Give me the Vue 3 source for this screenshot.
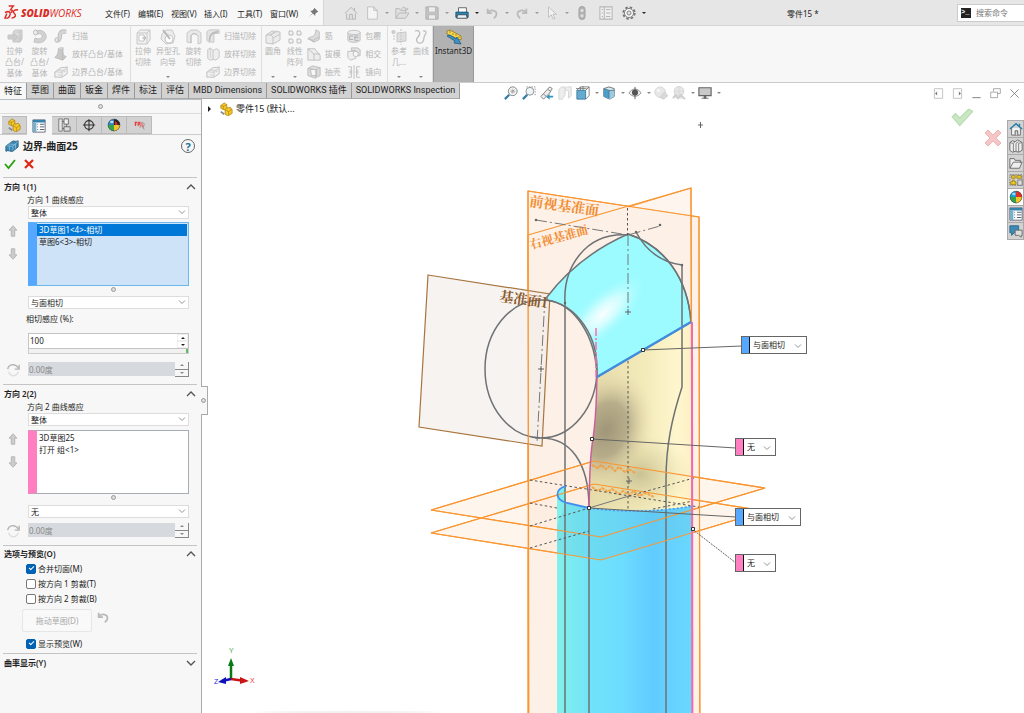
<script setup>
import { ref } from 'vue'

const menus = ['文件(F)', '编辑(E)', '视图(V)', '插入(I)', '工具(T)', '窗口(W)']
const quick = [
  { id: 'home', label: '主页', wide: false },
  { id: 'new', label: '新建', drop: true },
  { id: 'open', label: '打开', drop: true },
  { id: 'save', label: '保存', drop: true },
  { id: 'print', label: '打印', drop: true, on: true },
  { id: 'undo', label: '撤消', drop: true },
  { id: 'redo', label: '重做', drop: true },
  { id: 'cursor', label: '选择', drop: true },
  { id: 'traffic', label: '重建' },
  { id: 'sheet', label: '属性' },
  { id: 'gear', label: '选项', drop: true, on: true },
]
const ribbon = [
  {
    name: 'boss',
    big: [
      { id: 'extrude', lines: ['拉伸', '凸台/', '基体'] },
      { id: 'revolve', lines: ['旋转', '凸台/', '基体'] },
    ],
    small: [[
      { id: 'sweep', t: '扫描' },
      { id: 'loft', t: '放样凸台/基体' },
      { id: 'boundary', t: '边界凸台/基体' },
    ]],
  },
  {
    name: 'cut',
    big: [
      { id: 'cutbox', lines: ['拉伸', '切除'] },
      { id: 'hole', lines: ['异型孔', '向导'], drop: true },
      { id: 'cutrev', lines: ['旋转', '切除'] },
    ],
    small: [[
      { id: 'cutsweep', t: '扫描切除' },
      { id: 'cutloft', t: '放样切除' },
      { id: 'boundary', t: '边界切除' },
    ]],
  },
  {
    name: 'feat',
    big: [
      { id: 'fillet', lines: ['圆角'], drop: true },
      { id: 'pattern', lines: ['线性', '阵列'], drop: true },
    ],
    small: [
      [{ id: 'rib', t: '筋' }, { id: 'draft', t: '拔模' }, { id: 'shell', t: '抽壳' }],
      [{ id: 'wrap', t: '包覆' }, { id: 'intersect', t: '相交' }, { id: 'mirror', t: '镜向' }],
    ],
  },
  {
    name: 'ref',
    big: [
      { id: 'refgeo', lines: ['参考', '几...'], drop: true },
      { id: 'curve', lines: ['曲线'], drop: true },
    ],
    small: [],
  },
]
const tabs = ['特征', '草图', '曲面', '钣金', '焊件', '标注', '评估', 'MBD Dimensions', 'SOLIDWORKS 插件', 'SOLIDWORKS Inspection']
const activeTab = ref('特征')
const hud = [
  { id: 'zoomfit', label: '整屏显示全图' },
  { id: 'zoomarea', label: '局部放大' },
  { id: 'prevview', label: '上一视图' },
  { id: 'section', label: '剖面视图' },
  { id: 'orient', label: '视图定向', drop: true },
  { id: 'display', label: '显示样式', drop: true },
  { id: 'eye', label: '隐藏/显示', drop: true },
  { id: 'appear', label: '编辑外观' },
  { id: 'scene', label: '应用布景', drop: true },
  { id: 'monitor', label: '视图设定', drop: true },
]
const panelTabs = ['part', 'props', 'config', 'target', 'ball', 'ra']
const taskTabs = ['thome', 'library', 'folder', 'palette', 'ball', 'props', 'chat']
const wins = [
  { id: 'winleft', label: '左侧窗格' },
  { id: 'winright', label: '右侧窗格' },
  { id: 'winmin', label: '最小化' },
  { id: 'winrest', label: '还原' },
  { id: 'winclose', label: '关闭' },
]
const directions = [
  {
    n: 1, title: '方向 1(1)', label: '方向 1 曲线感应', items: ['3D草图1<4>-相切', '草图6<3>-相切'],
    on: true, end: '与面相切', influence: true,
  },
  { n: 2, title: '方向 2(2)', label: '方向 2 曲线感应', items: ['3D草图25', '打开 组<1>'], on: false, end: '无', influence: false },
]
const merge = ref(true)
const trim1 = ref(false)
const trim2 = ref(false)
const preview = ref(true)
const callouts = [
  { k: 'a', t: '与面相切', tone: 'blue', wide: true },
  { k: 'b', t: '无', tone: 'pink' },
  { k: 'c', t: '与面相切', tone: 'blue', wide: true },
  { k: 'd', t: '无', tone: 'pink' },
]
</script>

<template>
  <div class="app">
    <svg class="sprite" aria-hidden="true">
      <defs>
        <linearGradient id="gy" x1="0" y1="0" x2="1" y2="1"><stop offset="0" stop-color="#eeeeee" /><stop offset="1" stop-color="#c4c4c4" /></linearGradient>
        <symbol id="home" viewBox="0 0 16 16"><g fill="#e4e4e4" stroke="#b4b4b4" stroke-width="1.1"><path d="M3 8v7h10V8L8 3z" /><path d="M1 8.5 8 1.5l7 7M6.5 15V9.5h3V15M12 2v3.5" /></g></symbol>
        <symbol id="new" viewBox="0 0 16 16"><path d="M3 1h7l4 4v10H3zM10 1v4h4" fill="#f5f5f5" stroke="#bdbdbd" /></symbol>
        <symbol id="open" viewBox="0 0 16 16"><path d="M1 14V3h4l1.500 2H12v3M1 14l4-6h11l-4 6zM7 4c2-4 5-3 6 0M11 3l2.500 2L15 2" fill="#e0e0e0" stroke="#b4b4b4" /></symbol>
        <symbol id="save" viewBox="0 0 16 16"><path d="M1 1h13l1 1v13H1z" fill="#c3c3c3" stroke="#adadad" /><path d="M4 1h8v6H4zM4 10h8v5H4z" fill="#ededed" stroke="#b5b5b5" /></symbol>
        <symbol id="print" viewBox="0 0 16 16"><path d="M4 2h9v6H4z" fill="#fff" stroke="#555" /><path d="M1 7h14v6H1z" fill="#2c86b5" stroke="#164d6b" /><path d="M3 10h10l1 4H2z" fill="#e8f4fa" stroke="#444" /></symbol>
        <symbol id="undo" viewBox="0 0 16 16"><path d="M3 3v5h5M3 8c3-5 11-3 10 2-.3 2-1.500 3-3 4" fill="none" stroke="#bababa" stroke-width="2" /></symbol>
        <symbol id="redo" viewBox="0 0 16 16"><path d="M13 3v5H8M13 8C10 3 2 5 3 10c.3 2 1.500 3 3 4" fill="none" stroke="#bababa" stroke-width="2" /></symbol>
        <symbol id="cursor" viewBox="0 0 16 16"><path d="M4 1v12l3-3 2.500 5 2-1L9 9.500h4z" fill="#f2f2f2" stroke="#bcbcbc" /></symbol>
        <symbol id="traffic" viewBox="0 0 16 16"><rect x="4.500" y=".5" width="7" height="15" rx="3.500" fill="#b0b0b0" stroke="#a2a2a2" /><circle cx="8" cy="5" r="2" fill="#dcdcdc" /><circle cx="8" cy="11" r="2" fill="#dcdcdc" /></symbol>
        <symbol id="sheet" viewBox="0 0 16 16"><path d="M1 1h14v14H1zM6 1v14M8 4h5M8 8h5M8 12h5M3 4h1.500M3 8h1.500M3 12h1.500" fill="#eee" stroke="#b7b7b7" stroke-width="1.200" /></symbol>
        <symbol id="gear" viewBox="0 0 16 16"><circle cx="8" cy="8" r="6.500" fill="none" stroke="#777" stroke-width="2.200" stroke-dasharray="2.900 2.205" /><circle cx="8" cy="8" r="5.200" fill="#f5f5f5" stroke="#777" /><circle cx="8" cy="8" r="2.300" fill="#e6e6e6" stroke="#777" /></symbol>
        <symbol id="pin" viewBox="0 0 16 16"><path d="M9 1l6 6-2 .5-2.500 2.500v3L7 9.500 1 15l5.500-6L3 5.500h3L8.500 3z" fill="#777" /></symbol>
        <symbol id="extrude" viewBox="0 0 16 16"><g fill="url(#gy)" stroke="#c6c6c6"><path d="M6 3l2-2h7v9l-2 3H6z" /><path d="M6 3h7v10M13 3l2-2" /><path d="M1 6h6V4l4 4-4 4v-2H1z" fill="#ccc" /></g></symbol>
        <symbol id="revolve" viewBox="0 0 16 16"><path d="M4 2c9-3 13 6 8 10-3 2.500-7 2-10 1l1-4c5 2 8 0 7-3C9 4 6 5 4 5z" fill="#d2d2d2" stroke="#c3c3c3" /><ellipse cx="3.500" cy="3.500" rx="2" ry="2.500" fill="#eee" stroke="#bbb" /></symbol>
        <symbol id="sweep" viewBox="0 0 16 16"><path d="M3 13c5 0 3-4 4-7 1-4 4-3 7-3" fill="none" stroke="#bdbdbd" stroke-width="5" /><path d="M3 13c5 0 3-4 4-7 1-4 4-3 7-3" fill="none" stroke="#d5d5d5" stroke-width="3" /><ellipse cx="3" cy="12.500" rx="2" ry="2.500" fill="#e8e8e8" stroke="#b5b5b5" /></symbol>
        <symbol id="loft" viewBox="0 0 16 16"><path d="M5 2h5c0 7 1 8 4 9l-4 4-9-3c3-3 4-5 4-10z" fill="#c9c9c9" stroke="#bababa" /><path d="M5 2l1-1h5l-1 1M10 2v13" fill="#eee" stroke="#bababa" /></symbol>
        <symbol id="boundary" viewBox="0 0 16 16"><path d="M1 8l7-5c1-1 3 1 7-1v8l-6 4c-2 1-4-1-8 0z" fill="#efefef" stroke="#bcbcbc" /><path d="M1 8c3-1 5 1 8 0l6-5M9 8v6M4 6c3-1 5 1 8 0M5 11l3 1M11 8l2-1" fill="none" stroke="#c9c9c9" /></symbol>
        <symbol id="cutbox" viewBox="0 0 16 16"><path d="M2 4l3-3h10v10l-3 4H2zM2 4h10v11M12 4l3-3" fill="#f1f1f1" stroke="#c6c6c6" /><path d="M4 6h5v6H4z" fill="#fff" stroke="#c6c6c6" /><path d="M7 9h3M9 7l2 2-2 2" stroke="#b8b8b8" fill="none" /></symbol>
        <symbol id="hole" viewBox="0 0 16 16"><path d="M2 5l4-4h6l3 6-2 7-7 1-5-5z" fill="#ececec" stroke="#c9c9c9" /><circle cx="9" cy="10" r="4" fill="#fff" stroke="#c6c6c6" /><path d="M3 1l7 9" stroke="#b8b8b8" stroke-width="2" /></symbol>
        <symbol id="cutrev" viewBox="0 0 16 16"><path d="M1 4l4-3h6l4 3v10l-3 1V7c-2-3-6-3-7 0v7l-4-1z" fill="#e8e8e8" stroke="#c9c9c9" /><path d="M5 14V7c1-3 5-3 7 0" fill="none" stroke="#bebebe" /></symbol>
        <symbol id="cutsweep" viewBox="0 0 16 16"><path d="M1 3l3-2h11v4H9v10H3l-2-2z" fill="#e5e5e5" stroke="#c4c4c4" /><path d="M4 14C4 6 7 4 14 3" fill="none" stroke="#bcbcbc" stroke-width="2" /></symbol>
        <symbol id="cutloft" viewBox="0 0 16 16"><path d="M2 3l3-2 3 3v10l-3 1-3-2zM8 4l4-2 3 2v8l-4 3-3-1" fill="#eee" stroke="#c0c0c0" /><path d="M5 1v11" stroke="#ccc" /></symbol>
        <symbol id="fillet" viewBox="0 0 16 16"><path d="M1 6l6-4 8 1v8l-7 4-7-1z" fill="#ececec" stroke="#c4c4c4" /><path d="M1 6c5 0 7 0 7 4v5M8 9l7-4" fill="none" stroke="#c4c4c4" /><path d="M5 6l7-4" stroke="#ccc" stroke-width="2" /></symbol>
        <symbol id="pattern" viewBox="0 0 16 16"><g fill="#f3f3f3" stroke="#bcbcbc"><path d="M2 2h3l1 1v3H2zM10 2h3l1 1v3h-4zM2 10h3l1 1v3H2zM10 10h3l1 1v3h-4z" /></g></symbol>
        <symbol id="rib" viewBox="0 0 16 16"><path d="M10 1l4 2v9l-6 3-7-4 3-2c4 0 6-3 6-8z" fill="#dcdcdc" stroke="#bbb" /><path d="M1 11l6 2 7-4M7 13v2" fill="none" stroke="#bbb" /></symbol>
        <symbol id="draft" viewBox="0 0 16 16"><path d="M1 2h8l6 8v5H1z" fill="#ededed" stroke="#bdbdbd" /><path d="M1 2l7 6h7M8 8v7" fill="none" stroke="#bbb" /></symbol>
        <symbol id="shell" viewBox="0 0 16 16"><path d="M1 4l5-3 9 2v9l-6 3-8-3z" fill="#ddd" stroke="#b9b9b9" /><path d="M4 5h7v7H5zM1 4l9 1 5-2M10 5v10" fill="#f8f8f8" stroke="#b9b9b9" /></symbol>
        <symbol id="wrap" viewBox="0 0 16 16"><path d="M1 4v9c3 3 11 3 14 0V4z" fill="#e3e3e3" stroke="#bbb" /><ellipse cx="8" cy="4" rx="7" ry="2.500" fill="#eee" stroke="#bbb" /><path d="M7 8H3v4h4M13 8H9v5h4M9 10h4" stroke="#aaa" fill="none" /></symbol>
        <symbol id="intersect" viewBox="0 0 16 16"><path d="M5 1h7l3 2v7h-5V4H5z" fill="#e2e2e2" stroke="#bcbcbc" /><path d="M1 5h6l3 2v6l-6 2-3-3z" fill="#efefef" stroke="#bcbcbc" /><circle cx="10" cy="8" r="3" fill="#f7f7f7" stroke="#bbb" /></symbol>
        <symbol id="mirror" viewBox="0 0 16 16"><path d="M1 2h4v12H1M15 2h-4v12h4M8 0v16M2 8h3M14 8h-3M3 5l3 3-3 3M13 5l-3 3 3 3" fill="none" stroke="#bcbcbc" /></symbol>
        <symbol id="refgeo" viewBox="0 0 16 16"><path d="M6 4l9-1v9l-9 1z" fill="#dfdfdf" stroke="#c9c9c9" /><circle cx="2.500" cy="3" r="1.500" fill="#ddd" stroke="#bbb" /><path d="M10 0v16M3 6v6" stroke="#c5c5c5" stroke-dasharray="2 1" /></symbol>
        <symbol id="curve" viewBox="0 0 16 16"><path d="M2 2c5-2 6 3 3 6s-1 7 3 6 2-6 4-8 1-5-2-4" fill="none" stroke="#bdbdbd" stroke-width="1.200" /></symbol>
        <symbol id="instant" viewBox="0 0 16 16"><path d="M1 2l3-1 11 6v4l-3-1L1 5z" fill="#f9d74c" stroke="#8f7424" stroke-width=".8" /><path d="M4 2v2M7 4v2M10 5v2M13 7v2" stroke="#836a1e" stroke-width=".7" /><path d="M1 7l3-1 6 4 1-2 4 7-7-1 1-2z" fill="#3d92c7" stroke="#205a82" stroke-width=".8" /></symbol>
        <symbol id="zoomfit" viewBox="0 0 16 16"><path d="M1 15l5-5" stroke="#327da8" stroke-width="2.500" /><circle cx="10" cy="6" r="5" fill="#f7f7f7" stroke="#777" /><path d="M10 3v6M7 6h6M8 4l4 4M12 4L8 8" stroke="#999" stroke-width=".8" /></symbol>
        <symbol id="zoomarea" viewBox="0 0 16 16"><path d="M5 1h10v11" fill="none" stroke="#888" stroke-dasharray="1.500 1.500" /><path d="M1 15l5-5" stroke="#327da8" stroke-width="2.500" /><circle cx="9" cy="6" r="4.500" fill="#edf5f8" stroke="#888" /></symbol>
        <symbol id="prevview" viewBox="0 0 16 16"><path d="M1 12L11 1l3 2-3 5-7 7z" fill="#eee" stroke="#777" /><path d="M4 9l3 3M9 4l3 2" stroke="#777" /><path d="M15 11h-4V9l-4 3.500 4 3V13h4z" fill="#3794be" /></symbol>
        <symbol id="section" viewBox="0 0 16 16"><path d="M1 4l3-3h4v9l-3 5H1zM8 3l3-2h4v10l-3 3V6c-1-2-3-1-4 0" fill="#ededed" stroke="#d2d2d2" /></symbol>
        <symbol id="orient" viewBox="0 0 16 16"><path d="M5 1h10v10M1 5l4-4M11 5l4-4M11 15l4-4M5 1v4M8 0v5M0 3h12" fill="none" stroke="#777" /><path d="M1 5h10v10H1z" fill="#65abd0" stroke="#38799e" /></symbol>
        <symbol id="display" viewBox="0 0 16 16"><path d="M2 3l6-2 6 2v9l-5 3-7-3z" fill="#d9edf6" stroke="#666" /><path d="M2 3l6 2v10l-6-3z" fill="#4e9fc8" /><path d="M8 5h6v7l-5 3-1-1z" fill="#9acbe2" /><path d="M2 3l6 2h6M8 5v9" fill="none" stroke="#4d7485" /></symbol>
        <symbol id="eye" viewBox="0 0 16 16"><path d="M1 8c4-6 10-6 14 0-4 5-10 5-14 0z" fill="#eee" stroke="#888" /><circle cx="8" cy="7.500" r="3.500" fill="#555" /><path d="M8 1v14" stroke="#555" /></symbol>
        <symbol id="appear" viewBox="0 0 16 16"><circle cx="7" cy="7" r="6" fill="#e7e7e7" stroke="#d3d3d3" /><path d="M7 13l5-6 4 4-5 4z" fill="#dadada" stroke="#ccc" /><circle cx="5" cy="5" r="2" fill="#f5f5f5" /></symbol>
        <symbol id="scene" viewBox="0 0 16 16"><circle cx="8" cy="6" r="5.500" fill="#e7e7e7" stroke="#d0d0d0" /><path d="M1 14l3-4 3 4 3-4 5 5" fill="#e5e5e5" stroke="#cfcfcf" stroke-width="2" /><path d="M8 1v10M3 6h10" stroke="#d8d8d8" /></symbol>
        <symbol id="monitor" viewBox="0 0 16 16"><path d="M1 2h14v9H1z" fill="#c9c9c9" stroke="#666" stroke-width="1.300" /><path d="M7 11h2v3H7zM4 14h8" fill="#666" stroke="#666" /></symbol>
        <symbol id="part" viewBox="0 0 16 16"><path d="M2 4l4-3 3 2v4l4-1 2 3v4l-5 3-3-2V9L3 8 2 7z" fill="#f5c727" stroke="#a97d0b" stroke-width=".8" /><path d="M2 4l3 1 4-2M5 5v3M7 9l4 2 4-3M11 11v4M9 6l-2 3" fill="none" stroke="#a97d0b" stroke-width=".7" /><path d="M2 11l4 3" stroke="#888" stroke-width="2" /></symbol>
        <symbol id="props" viewBox="0 0 16 16"><path d="M1 1h14v14H1z" fill="#fff" stroke="#667" /><path d="M1 1h14v3H1z" fill="#3483ac" /><path d="M1 4h4v11H1z" fill="#78afca" /><path d="M6 6h1M9 6h5M6 9h1M9 9h5M6 12h1M9 12h5" stroke="#456" /></symbol>
        <symbol id="config" viewBox="0 0 16 16"><path d="M2 1h4v14H2z" fill="#e6e6e6" stroke="#777" /><path d="M6 4h3M6 12h3M11 7v3" fill="none" stroke="#666" /><path d="M8 1h5v6H8z" fill="#f2f2f2" stroke="#666" /><path d="M8 10h7v5H8z" fill="#ddd" stroke="#666" /></symbol>
        <symbol id="target" viewBox="0 0 16 16"><circle cx="8" cy="8" r="5" fill="none" stroke="#333" stroke-width="1.300" /><path d="M8 1v14M1 8h14" stroke="#333" stroke-width="1.200" /></symbol>
        <symbol id="ball" viewBox="0 0 16 16"><circle cx="8" cy="8" r="7" fill="#159fd8" /><path d="M8 8V1a7 7 0 0 1 7 7z" fill="#e5302a" /><path d="M8 8h7a7 7 0 0 1-7 7z" fill="#f4c529" /><path d="M8 8v7a7 7 0 0 1-7-7z" fill="#36a545" /><circle cx="8" cy="8" r="6.700" fill="none" stroke="#444" stroke-width=".6" /><ellipse cx="5.500" cy="4.500" rx="2" ry="1.500" fill="#fff" opacity=".6" /></symbol>
        <symbol id="ball2" viewBox="0 0 16 16"><circle cx="8" cy="8" r="7" fill="#2d86c4" /><path d="M8 8V1a7 7 0 0 1 7 7z" fill="#2a2020" /><path d="M9 8V3l3 3v2z" fill="#d92a20" /><path d="M8 8h7a7 7 0 0 1-7 7z" fill="#f4c529" /><path d="M8 8v7a7 7 0 0 1-7-7z" fill="#36a545" /><circle cx="8" cy="8" r="6.700" fill="none" stroke="#444" stroke-width=".6" /><ellipse cx="5.500" cy="4.500" rx="2" ry="1.500" fill="#fff" opacity=".7" /></symbol>
        <symbol id="ra" viewBox="0 0 16 16"><path d="M3 5h3M3 7h2M4 5v4M7 5v4M7 5h2v2H7" stroke="#e33f3f" fill="none" stroke-width="1.200" /><path d="M9 11l2-6 2 6M9 9h4" stroke="#e06a6a" fill="none" /><path d="M12 5c3 1 2 5 0 5M12 10l2 3" stroke="#888" fill="none" /></symbol>
        <symbol id="surface" viewBox="0 0 16 16"><path d="M1 8l7-5c2-2 4 1 7-1v7l-6 5c-2 1-5-2-8 0z" fill="#3986b0" stroke="#285f80" /><path d="M1 8c3-1 5 1 8 0l6-5M9 8v5M4 6c3-1 5 1 8 0M5 8v5M12 6v5" fill="none" stroke="#93cce8" stroke-width=".8" /></symbol>
        <symbol id="thome" viewBox="0 0 16 16"><path d="M3 7v8h10V7" fill="#f5f5f5" stroke="#666" /><path d="M1 8l7-6 7 6M12 2v3" fill="none" stroke="#2b7ca6" stroke-width="1.600" /><path d="M7 15v-5h3v5" fill="#ddd" stroke="#555" /></symbol>
        <symbol id="library" viewBox="0 0 16 16"><path d="M1 4l3-2 3 1 3-2 5 3v9l-4 2-4-1-3 1-3-2z" fill="#eee" stroke="#666" /><path d="M1 4l4 1v10M5 5l2-2M8 5v9M8 5l3-2M11 5v10M11 5l4-1" fill="none" stroke="#777" /></symbol>
        <symbol id="folder" viewBox="0 0 16 16"><path d="M1 14V3h5l1 2h6v3M1 14l4-7h10l-3 7z" fill="#eee" stroke="#666" /></symbol>
        <symbol id="palette" viewBox="0 0 16 16"><path d="M1 2h14v12H1z" fill="none" stroke="#777" stroke-dasharray="2 1" /><path d="M3 3h4v3H3zM9 3h5v3H9zM2 13v-3h2V8h2v2h2v3z" fill="#f1cb29" stroke="#9a8017" /><path d="M10 8h5v6h-5z" fill="#ddd" stroke="#777" /></symbol>
        <symbol id="chat" viewBox="0 0 16 16"><path d="M1 2h10v8H6l-3 3v-3H1z" fill="#3c8ab5" stroke="#286687" /><path d="M7 7h8v6h-1v2l-3-2H7z" fill="#ddd" stroke="#666" /></symbol>
        <symbol id="winleft" viewBox="0 0 16 16"><path d="M2 1h12v14H2z" fill="none" stroke="#aaa" /><path d="M6 5v6L3 8z" fill="#777" /></symbol>
        <symbol id="winright" viewBox="0 0 16 16"><path d="M2 1h12v14H2z" fill="none" stroke="#aaa" /><path d="M10 5v6l3-3z" fill="#777" /></symbol>
        <symbol id="winmin" viewBox="0 0 16 16"><path d="M2 14h12" stroke="#888" stroke-width="1.500" /></symbol>
        <symbol id="winrest" viewBox="0 0 16 16"><path d="M5 5V1h10v7h-4M1 6h10v8H1z" fill="none" stroke="#888" /></symbol>
        <symbol id="winclose" viewBox="0 0 16 16"><path d="M2 2l12 12M14 2L2 14" stroke="#777" stroke-width="1.200" /></symbol>
        <symbol id="up" viewBox="0 0 16 16"><path d="M8 2l4.500 5H10v7H6V7H3.500z" fill="#ccc" stroke="#b2b2b2" /></symbol>
        <symbol id="down" viewBox="0 0 16 16"><path d="M8 14l4.500-5H10V2H6v7H3.500z" fill="#ccc" stroke="#b2b2b2" /></symbol>
        <symbol id="flip" viewBox="0 0 16 16"><path d="M2 7c1-6 9-7 12-1M15 2v5h-5" fill="none" stroke="#b7b7b7" stroke-width="1.700" /><path d="M3 10c2 6 9 6 11 0" fill="none" stroke="#e0e0e0" stroke-width="1.700" /></symbol>
        <symbol id="chev" viewBox="0 0 8 8"><path d="M1 2.500l3 3 3-3" fill="none" stroke="#888" stroke-width=".9" /></symbol>
      </defs>
    </svg>

    <header class="title">
      <div class="brand-bar">
        <svg class="mark" viewBox="0 0 16 16" aria-hidden="true"><g fill="none" stroke="#dc2a24" stroke-width="1.500"><path d="M5 1h5L7 5c3 0 2 3 0 3" /><path d="M1 8l3-1c4 0 3 5 0 7H1l2-5" /><path d="M15 5c-5 0-6 2-4 4s2 4-3 5" /></g></svg>
        <strong class="brand">SOLID<span>WORKS</span></strong>
        <nav class="menus"><button v-for="m in menus" :key="m">{{ m }}</button></nav>
        <svg class="i10 pin"><use href="#pin" /></svg>
      </div>
      <div class="quick">
        <button v-for="q in quick" :key="q.id" :class="['q', q.id, { on: q.on }]" :aria-label="q.label">
          <svg class="i14"><use :href="'#' + q.id" /></svg><i v-if="q.drop" class="tri"></i>
        </button>
      </div>
      <span class="doc">零件15 *</span>
      <label class="search"><span class="prompt">&gt;_</span><input aria-label="搜索命令" placeholder="搜索命令"></label>
    </header>

    <section class="ribbon">
      <div v-for="g in ribbon" :key="g.name" :class="['group', g.name]">
        <button v-for="b in g.big" :key="b.id" :class="['big', b.id]">
          <svg class="i16"><use :href="'#' + b.id" /></svg>
          <span v-for="l in b.lines" :key="l">{{ l }}</span>
          <i v-if="b.drop" class="tri"></i>
        </button>
        <div v-for="(c, i) in g.small" :key="i" class="smalls">
          <button v-for="s in c" :key="s.t"><svg class="i14"><use :href="'#' + s.id" /></svg>{{ s.t }}</button>
        </div>
      </div>
      <button class="instant"><svg class="i16"><use href="#instant" /></svg><span>Instant3D</span></button>
    </section>

    <div class="tabrow">
      <nav class="tabs"><button v-for="t in tabs" :key="t" :class="{ active: activeTab === t }" @click="activeTab = t">{{ t }}</button></nav>
      <div class="hud">
        <button v-for="h in hud" :key="h.id" :aria-label="h.label" :class="{ drop: h.drop }"><svg class="i14"><use :href="'#' + h.id" /></svg><i v-if="h.drop" class="tri"></i></button>
      </div>
      <div class="wins"><button v-for="w in wins" :key="w.id" :aria-label="w.label"><svg class="i10"><use :href="'#' + w.id" /></svg></button></div>
    </div>

    <div class="main">
      <aside class="panel">
        <div class="grip"><i class="dot"></i></div>
        <nav class="ptabs"><button v-for="p in panelTabs" :key="p" :class="{ active: p === 'props' }" :aria-label="p"><svg class="i14"><use :href="p === 'ball' ? '#ball2' : '#' + p" /></svg></button></nav>
        <div class="ptitle">
          <svg class="i14"><use href="#surface" /></svg><h1>边界-曲面25</h1>
          <button class="help" aria-label="帮助">?</button>
        </div>
        <div class="confirm">
          <button aria-label="确定"><svg viewBox="0 0 12 12"><path d="M1 6l3.500 4L11 2" fill="none" stroke="#28a010" stroke-width="1.800" /></svg></button>
          <button aria-label="取消"><svg viewBox="0 0 12 12"><path d="M2 2l8 8M10 2l-8 8" stroke="#df2414" stroke-width="2.200" /></svg></button>
        </div>

        <section v-for="d in directions" :key="d.n" :class="['sec', { brief: !d.influence }]">
          <h2>{{ d.title }}<svg class="fold" viewBox="0 0 10 6"><path d="M1 5l4-4 4 4" /></svg></h2>
          <label class="lab" :for="'curve' + d.n">{{ d.label }}</label>
          <div class="pick"><select :id="'curve' + d.n"><option>整体</option></select><svg><use href="#chev" /></svg></div>
          <div class="listrow">
            <div class="arrows"><button aria-label="上移"><svg class="i14"><use href="#up" /></svg></button><button aria-label="下移"><svg class="i14"><use href="#down" /></svg></button></div>
            <ul role="listbox" :aria-label="d.title" :class="{ on: d.on }"><li v-for="(it, i) in d.items" :key="it" role="option" :aria-selected="d.on && i === 0">{{ it }}</li></ul>
          </div>
          <div class="sizer"><i class="dot"></i></div>
          <div class="pick"><select :aria-label="'相切类型 ' + d.n"><option>{{ d.end }}</option></select><svg><use href="#chev" /></svg></div>
          <template v-if="d.influence">
            <label class="lab tall" for="infl">相切感应 (%):</label>
            <div class="num"><input id="infl" value="100"><div class="spin"><button aria-label="增加"><i class="tri flip"></i></button><button aria-label="减少"><i class="tri"></i></button></div></div>
            <div class="track"><i></i></div>
          </template>
          <div class="angle">
            <button class="rev" aria-label="反向"><svg class="i14"><use href="#flip" /></svg></button>
            <input :aria-label="'角度 ' + d.n" value="0.00度" disabled>
            <div class="spin raised"><button aria-label="增加" disabled><i class="tri flip"></i></button><button aria-label="减少" disabled><i class="tri"></i></button></div>
          </div>
        </section>

        <section class="sec opts">
          <h2>选项与预览(O)<svg class="fold" viewBox="0 0 10 6"><path d="M1 5l4-4 4 4" /></svg></h2>
          <label class="chk"><input v-model="merge" type="checkbox">合并切面(M)</label>
          <label class="chk"><input v-model="trim1" type="checkbox">按方向 1 剪裁(T)</label>
          <label class="chk"><input v-model="trim2" type="checkbox">按方向 2 剪裁(B)</label>
          <div class="dragrow"><button class="drag" disabled>拖动草图(D)</button><button aria-label="撤消" disabled><svg class="i14"><use href="#undo" /></svg></button></div>
          <label class="chk"><input v-model="preview" type="checkbox">显示预览(W)</label>
        </section>
        <section class="sec last">
          <h2>曲率显示(Y)<svg class="fold" viewBox="0 0 10 6"><path d="M1 1l4 4 4-4" /></svg></h2>
        </section>
        <button class="splitter" aria-label="折叠面板"><i class="dot"></i></button>
      </aside>

      <main class="view">
        <svg class="scene" role="img" aria-label="三维模型">
          <defs>
            <linearGradient id="cyl" x1="557" x2="693" y1="0" y2="0" gradientUnits="userSpaceOnUse"><stop offset="0" stop-color="#83f1ea" /><stop offset=".25" stop-color="#70e3fa" /><stop offset=".48" stop-color="#6cdcff" /><stop offset=".7" stop-color="#60ccff" /><stop offset="1" stop-color="#6bd8ff" /></linearGradient>
            <radialGradient id="gloss" cx="0" cy="0" r="1" gradientTransform="translate(603 314) rotate(-42) scale(58 22)" gradientUnits="userSpaceOnUse"><stop offset="0" stop-color="#fff" stop-opacity=".95" /><stop offset=".4" stop-color="#f4ffff" stop-opacity=".6" /><stop offset="1" stop-color="#9bfbff" stop-opacity="0" /></radialGradient>
            <linearGradient id="yel" x1="592" x2="693" y1="0" y2="0" gradientUnits="userSpaceOnUse"><stop offset="0" stop-color="#e6dbaa" /><stop offset=".5" stop-color="#f3eaba" /><stop offset=".85" stop-color="#fff6cd" /><stop offset="1" stop-color="#ffefc5" /></linearGradient>
            <radialGradient id="shade" cx="0" cy="0" r="1" gradientTransform="translate(606 430) rotate(20) scale(46 62)" gradientUnits="userSpaceOnUse"><stop offset="0" stop-color="#a09678" /><stop offset=".45" stop-color="#aea484" stop-opacity=".85" /><stop offset="1" stop-color="#e8dbaa" stop-opacity="0" /></radialGradient>
            <radialGradient id="low" cx="0" cy="0" r="1" gradientTransform="translate(640 474) scale(52 40)" gradientUnits="userSpaceOnUse"><stop offset="0" stop-color="#b8b184" stop-opacity=".7" /><stop offset="1" stop-color="#d8cf9a" stop-opacity="0" /></radialGradient>
            <filter id="soft"><feGaussianBlur stdDeviation="5" /></filter>
          </defs>
          <g transform="translate(-202 -99)">
            <ellipse cx="348" cy="715" rx="90" ry="3" fill="#bbb" opacity=".5" filter="url(#soft)" />
            <g fill="#fdf0e5" stroke="#f99632" stroke-width="1.200">
              <path d="M528 191L699 217 701 1400H528z" fill-opacity=".9" /><path d="M528 235L691 188 694 1400H529z" fill-opacity=".65" />
            </g>
            <g fill="#fdebdc" fill-opacity=".5" stroke="#f99632" stroke-width="1.200">
              <path d="M431 510L594 461 765 488 601 537zM431 533L594 484 765 511 601 560z" />
            </g>
            <path d="M428 275L550 294 542 446 419 427z" fill="#f3ede9" fill-opacity=".65" stroke="#a8753f" stroke-width="1.200" />
            <g>
              <path d="M597 377L691 322 693 507Q640 515 589 508C590 480 589 462 593 439 597 410 596 400 597 377z" fill="url(#yel)" />
              <path d="M597 377L691 322 693 507Q640 515 589 508C590 480 589 462 593 439 597 410 596 400 597 377z" fill="url(#low)" />
              <path d="M597 377L691 322 693 507Q640 515 589 508C590 480 589 462 593 439 597 410 596 400 597 377z" fill="url(#shade)" />
            </g>
            <path d="M547 297C560 280 585 253 628 234 665 246 688 279 691 322L597 377C596 335 574 304 547 300z" fill="#9bfbff" />
            <path d="M547 297C560 280 585 253 628 234 665 246 688 279 691 322L597 377C596 335 574 304 547 300z" fill="url(#gloss)" stroke="#707577" stroke-width="1.500" />
            <path d="M557 495C557 490 561 487 566 486L566 503 589 508Q640 515 693 506V1400H557z" fill="url(#cyl)" />
            <path d="M566 503Q620 515 693 506V531L602 559 557 553V526z" fill="#67c8df" opacity=".3" />
            <g fill="none" stroke="#6f7274" stroke-width="1.500">
              <ellipse cx="541" cy="369" rx="56" ry="69" />
              <path d="M565 1400V303C563 268 585 232 628 235M628 234C665 246 688 279 691 322" />
              <path d="M636 232C645 249 659 262 682 265V387C672 418 666 445 666 480V1400M541 438C570 438 589 462 589 508V1400" />
            </g>
            <g fill="none" stroke="#f99632" stroke-width="1.100">
              <path d="M431 510L594 461 765 488 601 537zM431 533L594 484 765 511 601 560z" />
              <path d="M528 191L530 1400M699 217L701 1400M691 188L694 1400M528 191L699 217M628 207L691 188" />
              <path d="M592 465l6 3 3-3 5 4 4-3 5 5 4-4 6 5 4-3 6 4M592 487l6 4 4-3 6 4 4-3 7 5 4-3 6 4 5-4 5 5 7-3 8 4" stroke-width="2" stroke-dasharray="3 1" opacity=".8" />
            </g>
            <g stroke="#555" fill="none" stroke-dasharray="2.500 2.500">
              <path d="M627.500 208V235M628 361V511M530 480L699 507M530 503L557 508M530 526L589 508M629 496L694 478M530 548L589 531M653 509L693 501" />
            </g>
            <g stroke="#777" fill="none" stroke-dasharray="11 3 2 3"><path d="M536 220L628 235 660 226M628 235V312M545 297L537 443" /></g>
            <path d="M589 508L629 496" stroke="#777" />
            <path d="M625 312h6M628 309v6M538 369h6M541 366v6M626 481h6M629 478v6M698 125h5M700.500 122v6M535 438h5" stroke="#666" />
            <g fill="#666"><circle cx="536" cy="220" r="1.300" /><circle cx="660" cy="225" r="1.300" /><circle cx="636" cy="232" r="1.200" /><circle cx="682" cy="265" r="1.200" /><circle cx="565" cy="303" r="1.200" /></g>
            <path d="M597 377C596 400 597 410 593 439 589 462 590 480 589 508" fill="none" stroke="#c9609c" stroke-width="1.500" />
            <path d="M692 322L693 1400" fill="none" stroke="#f06bb4" stroke-width="2" />
            <path d="M596 328V377" stroke="#ff69b4" stroke-dasharray="8 2 2 2" stroke-width="1.500" />
            <path d="M597 377L691 322" fill="none" stroke="#418cdc" stroke-width="2.400" />
            <path d="M566 486C555 489 554 499 567 503L589 508" fill="none" stroke="#418cee" stroke-width="1.800" />
            <path d="M589 508Q640 515 693 506" fill="none" stroke="#429aff" stroke-width="1.500" stroke-dasharray="2 2" />
            <g class="plane"><text class="wide" transform="translate(529 206) rotate(8)">前视基准面</text><text transform="translate(531 249) rotate(-15)">右视基准面</text><text class="brown" transform="translate(499 301) rotate(8)">基准面1</text></g>
            <g fill="none" stroke="#666"><path d="M643 350L742 346M592 439L736 448M589 508L736 517" /><path d="M692 529L736 563" stroke-dasharray="2 1" /></g>
            <g fill="#fff" stroke="#333"><path d="M641.500 348.500h3v3h-3zM590.500 437.500h3v3h-3zM587.500 506.500h3v3h-3zM691.500 527.500h3v3h-3z" /></g>
            <g transform="translate(231 679)">
              <path d="M0 0V-16" stroke="#087b17" stroke-width="2.500" /><path d="M-3-13L0-21 3-13z" fill="#087b17" />
              <path d="M0 0L14 2" stroke="#c91515" stroke-width="2.500" /><path d="M9-2L18 2 9 5z" fill="#c91515" />
              <path d="M0 0L-9 2" stroke="#1111b9" stroke-width="2.500" /><path d="M-5-2L-13 3-5 5z" fill="#1111b9" />
              <text x="-2" y="-26" fill="#4aad54">Y</text><text x="19" y="4" fill="#e84141">X</text><text x="-17" y="5" fill="#2929cf">Z</text>
            </g>
          </g>
        </svg>

        <div class="tree"><i class="exp"></i><svg class="i14"><use href="#part" /></svg><span>零件15 (默认...</span></div>

        <label v-for="c in callouts" :key="c.k" :class="['callout', c.k, c.tone, { wide: c.wide }]">
          <select :aria-label="'相切控制 ' + c.k"><option>{{ c.t }}</option></select><svg><use href="#chev" /></svg>
        </label>

        <button class="ok" aria-label="确定"><svg viewBox="0 0 20 16"><path d="M1 8l3-3 4 4 8-8 4 2L8 16z" fill="#c9e7c2" stroke="#b7dab0" /></svg></button>
        <button class="no" aria-label="取消"><svg viewBox="0 0 18 18"><path d="M4 1l5 5 5-5 3 3-5 5 5 5-3 3-5-5-5 5-3-3 5-5-5-5z" fill="#f5c6c5" stroke="#e9b5b5" /></svg></button>
        <nav class="task"><button v-for="t in taskTabs" :key="t" :class="{ active: t === 'ball' }" :aria-label="t"><svg class="i14"><use :href="'#' + t" /></svg></button></nav>
      </main>
    </div>
  </div>
</template>

<style>
body { margin: 0; background: #fff; }
</style>

<style scoped>
.app { display: flex; flex-direction: column; height: 100vh; min-height: 700px; overflow: hidden; font: 8px/10px "Noto Sans", "Noto Sans CJK SC", sans-serif; color: #222; background: #fff; }
.app *, .app *::before { box-sizing: border-box; }
button, input, select { font: inherit; color: inherit; margin: 0; padding: 0; border: 0; background: none; border-radius: 0; outline: 0; }
button { white-space: nowrap; }
svg { display: block; flex: none; }
.sprite { position: absolute; width: 0; height: 0; }
.i10 { width: 11px; height: 11px; }
.i14 { width: 14px; height: 14px; }
.i16 { width: 16px; height: 16px; }
.tri { display: block; flex: none; width: 0; height: 0; border: 2px solid transparent; border-top-color: currentColor; border-bottom: 0; }
.tri.flip { transform: rotate(180deg); }
.dot { display: block; width: 5px; height: 5px; border: 1px solid #999; border-radius: 50%; background: #ddd; }

.title { display: flex; align-items: center; flex: none; height: 26px; background: #e6e6e6; border-bottom: 1px solid #d4d4d4; }
.brand-bar { display: flex; align-items: center; width: 324px; height: 25px; padding-left: 4px; background: #f7f7f7; flex: none; border-right: 1px solid #d8d8d8; }
.mark { width: 15px; height: 17px; }
.brand { width: 82px; padding-left: 2px; font: italic 900 10px/12px "Open Sans", sans-serif; color: #dc2a24; }
.brand span { font-weight: 400; }
.menus { display: flex; gap: 7px; padding: 2px 0 0 4px; }
.menus button { min-width: 26px; text-align: left; }
.pin { margin-left: 10px; }
.quick { display: flex; flex: none; margin-left: 16px; color: #999; }
.q { display: flex; align-items: center; width: 30px; height: 20px; padding-left: 4px; gap: 6px; }
.q.home { width: 23px; }
.q.home + .q { padding-left: 2px; width: 28px; }
.q.traffic { width: 24px; }
.q.sheet { width: 23px; }
.q.on { color: #222; }
.doc { flex: 1; padding: 2px 0 0 139px; white-space: nowrap; }
.search { display: flex; align-items: center; flex: none; width: 67px; height: 18px; padding-left: 3px; background: #fff; border: 1px solid #ccc; border-right: 0; }
.prompt { width: 10px; height: 10px; background: #222; color: #fff; font: bold 7px/9px "Liberation Mono", monospace; }
.search input { width: 48px; padding-left: 5px; }
.search input::placeholder { color: #777; opacity: 1; }

.ribbon { display: flex; flex: none; height: 57px; background: #f7f7f7; color: #b5b5b5; border-bottom: 1px solid #ccc; }
.group { display: flex; border-right: 1px solid #dedede; }
.big { display: flex; flex-direction: column; align-items: center; width: 25px; padding-top: 3px; line-height: 11px; }
.big .tri { margin-top: auto; margin-bottom: 4px; color: #888; }
.boss { width: 131px; padding-left: 2px; }
.cut { width: 131px; }
.cut .hole { width: 26px; }
.cut .cutbox { width: 24px; }
.feat { width: 126px; }
.feat .big { width: 22px; }
.ref { width: 45px; }
.ref .big { width: 22px; }
.smalls { display: flex; flex-direction: column; padding: 1px 0 0 1px; }
.smalls button { display: flex; align-items: center; gap: 4px; height: 18px; }
.boss .smalls { padding-left: 2px; }
.cut .smalls { padding-left: 0; }
.feat .smalls { width: 41px; }
.instant { display: flex; flex-direction: column; align-items: center; width: 41px; padding-top: 3px; background: #b2b2b2; border: 1px solid #999; border-top: 0; border-bottom: 0; color: #222; }
.instant span { line-height: 11px; }

.tabrow { display: flex; flex: none; height: 16px; position: relative; z-index: 2; background: #fff; }
.tabs { display: flex; flex: none; font: 9px/15px Roboto, "Noto Sans CJK SC", sans-serif; }
.tabs button { height: 16px; padding: 0 4px; background: #d2d2d2; border-right: 1px solid #999; border-bottom: 1px solid #aaa; }
.tabs button.active { background: #f7f7f7; border-bottom: 0; }
.hud { display: flex; align-items: flex-start; padding: 3px 0 0 44px; color: #888; }
.hud button { display: flex; align-items: center; width: 18px; height: 14px; gap: 5px; }
.hud button.drop { width: 26px; }
.wins { display: flex; gap: 8px; margin-left: auto; padding: 5px 4px 0 0; }

.main { display: flex; flex: 1; min-height: 0; }
.panel { position: relative; display: flex; flex-direction: column; flex: none; width: 202px; background: #f7f7f7; border-right: 1px solid #aaa; border-top: 1px solid #b8c0c6; z-index: 1; }
.grip { display: flex; justify-content: center; align-items: center; height: 14px; border-bottom: 1px solid #ddd; }
.ptabs { display: flex; height: 21px; padding: 2px 0 0 2px; border-bottom: 1px solid #ccc; }
.ptabs button { display: grid; place-items: center; width: 25px; height: 18px; background: #d2d2d2; border: 1px solid #bbb; border-width: 1px 1px 1px 0; }
.ptabs button.active { background: #f7f7f7; height: 19px; border-color: #f7f7f7; }
.ptitle { display: flex; align-items: center; height: 22px; padding: 0 6px 0 5px; }
h1 { flex: 1; margin: 0 0 0 4px; font-size: 10px; line-height: 14px; font-weight: 700; }
.help { width: 14px; height: 14px; border: 1px solid #666; border-radius: 50%; color: #1d6f9c; font-size: 11px; font-weight: 700; line-height: 11px; }
.confirm { display: flex; gap: 7px; height: 20px; padding: 1px 0 0 4px; align-items: flex-start; }
.confirm svg { width: 12px; height: 12px; }
.sec { margin: 0 4px 0 3px; padding: 0 8px 7px 25px; border-top: 1px solid #c4c4c4; }
h2 { display: flex; align-items: center; justify-content: space-between; height: 17px; margin: 0 -8px 0 -25px; padding: 0 1px; font-size: 8px; font-weight: 600; }
.fold { width: 10px; height: 6px; }
.fold path { fill: none; stroke: #555; stroke-width: 1.400; }
.lab { display: block; height: 11px; margin-left: -1px; }
.lab.tall { height: 24px; line-height: 20px; margin-left: -2px; }
.pick { position: relative; height: 13px; }
.pick select { display: block; width: 100%; height: 13px; padding-left: 2px; appearance: none; background: #fff; border: 1px solid #ddd; }
.pick svg { position: absolute; right: 3px; top: 2px; width: 8px; height: 8px; pointer-events: none; }
.listrow { display: flex; height: 64px; margin: 3px 0 0 -22px; }
.arrows { display: flex; flex-direction: column; width: 22px; gap: 9px; padding-top: 2px; }
.arrows button { width: 16px; height: 14px; }
ul { flex: 1; margin: 0; padding: 1px 1px 1px 0; list-style: none; background: #fff; border: 1px solid #a8adb5; border-left: 9px solid #ff7fc1; }
ul.on { background: #cfe3f8; border-color: #6ab8ee; border-left-color: #55a7ff; }
li { height: 12px; line-height: 11px; padding-left: 2px; }
ul.on li[aria-selected="true"] { background: #0078d7; color: #fff; }
.sizer { display: flex; justify-content: center; height: 10px; padding: 1px 0 0 9px; }
.brief .listrow { margin-top: 4px; }
.brief .sizer { height: 11px; }
.num { display: flex; height: 16px; background: #fff; border: 1px solid #c3c3c3; }
.num input { flex: 1; min-width: 0; padding-left: 1px; }
.spin { display: flex; flex-direction: column; width: 11px; }
.spin button { flex: 1; display: grid; place-items: center; border: 1px solid #eee; }
.track { height: 5px; background: #f1f1f1; border: 1px solid #ccc; border-top: 0; display: flex; justify-content: flex-end; }
.track i { width: 2px; border: 1px solid #64b96a; }
.angle { display: flex; height: 15px; margin: 5px 0 0 -22px; }
.track + .angle { margin-top: 8px; }
.rev { width: 22px; }
.angle input { flex: 1; min-width: 0; height: 14px; padding-left: 1px; background: #d6dadf; color: #888; }
.raised { width: 14px; }
.raised button { border: 1px solid #888; border-width: 0 1px 1px 0; color: #888; }
.opts { padding: 0 0 2px 22px; }
.opts h2 { height: 15px; margin: 0 0 0 -22px; }
.chk { display: flex; align-items: center; height: 15px; gap: 2px; }
.chk input { appearance: none; display: grid; place-items: center; width: 10px; height: 10px; margin-left: 1px; background: #fff; border: 1px solid #777; border-radius: 2px; }
.chk input:checked { background: #0061b5; border-color: #0061b5; }
.chk input:checked::before { content: ""; width: 5px; height: 3px; border: solid #fff; border-width: 0 0 1px 1px; transform: translateY(-1px) rotate(-45deg); }
.dragrow { display: flex; gap: 4px; margin: 3px 0 4px -3px; height: 23px; }
.drag { width: 70px; height: 23px; border: 1px solid #e6e6e6; border-radius: 2px; color: #aaa; background: #f9f9f9; }
.dragrow svg { margin-top: -8px; }
.last { padding-bottom: 0; }
.splitter { position: absolute; left: 201px; top: 286px; width: 7px; height: 29px; border: 1px solid #aaa; border-left: 0; background: #f7f7f7; }

.view { position: relative; flex: 1; min-width: 0; overflow: hidden; background: #fff; }
.scene { position: absolute; inset: 0; width: 100%; height: 100%; }
.scene text { font: 7px "Liberation Sans", sans-serif; }
.scene .plane text { font: 700 12px "Noto Serif CJK SC", "Noto Sans CJK SC", serif; fill: #f28d31; }
.scene .plane .wide { font-size: 14px; }
.scene .plane .brown { font-size: 14px; fill: #8b5a2b; }
.tree { position: absolute; left: 6px; top: 3px; display: flex; align-items: center; font-size: 9px; line-height: 14px; }
.exp { border: 3px solid transparent; border-left-color: #222; border-right: 0; }
.tree svg { margin: 0 3px 0 8px; }
.callout { position: absolute; width: 41px; height: 18px; background: #fff; border: 1px solid #666; }
.callout::before { content: ""; position: absolute; left: 0; top: 0; width: 8px; height: 16px; background: #55a7ff; border-right: 1px solid #111; }
.callout.pink::before { background: #ff7fc1; }
.callout.wide { width: 66px; }
.callout select { width: 100%; height: 16px; padding-left: 11px; appearance: none; }
.callout svg { position: absolute; right: 4px; top: 5px; width: 8px; height: 8px; pointer-events: none; }
.a { left: 539px; top: 237px; }
.b { left: 533px; top: 339px; }
.c { left: 533px; top: 409px; }
.d { left: 533px; top: 455px; }
.ok { position: absolute; right: 51px; top: 9px; width: 22px; }
.no { position: absolute; right: 22px; top: 30px; width: 18px; }
.task { position: absolute; right: 0; top: 21px; width: 17px; display: flex; flex-direction: column; }
.task button { display: grid; place-items: center; height: 18px; margin-bottom: -1px; border: 1px solid #aaa; background: #d2d2d2; }
.task button.active { background: #fff; }
</style>
